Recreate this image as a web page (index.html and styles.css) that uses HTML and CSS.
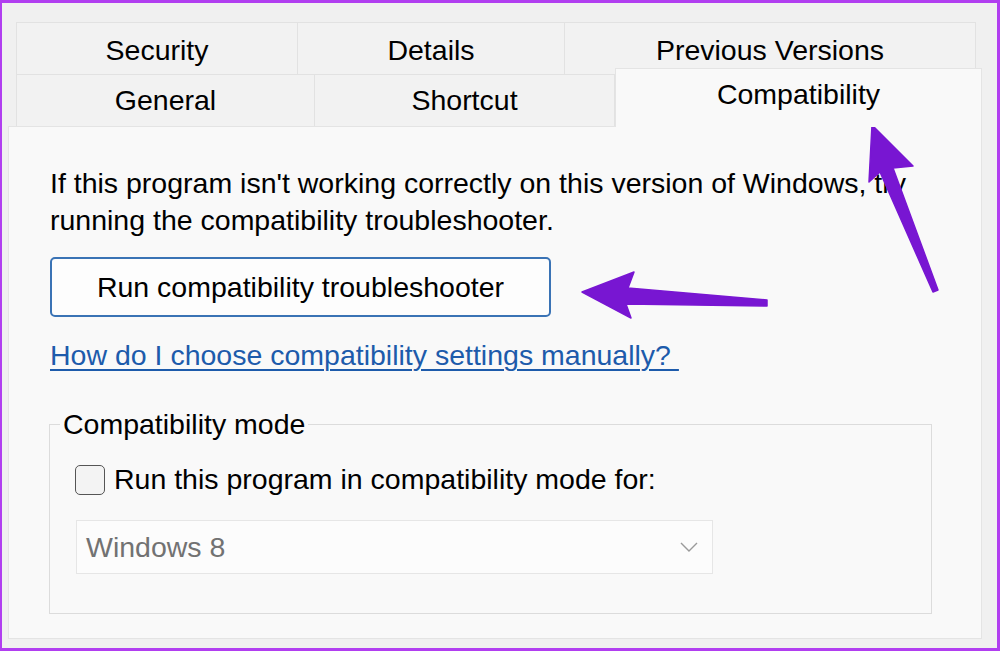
FILE: index.html
```html
<!DOCTYPE html>
<html lang="en">
<head>
  <meta charset="UTF-8" />
  <meta name="viewport" content="width=device-width, initial-scale=1" />
  <title>Properties - Compatibility</title>
  <link rel="stylesheet" href="styles.css">
</head>
<body>
  <div class="window">
    <div class="tabs">
      <div class="tab-row top-row">
        <div class="tab tab-security">Security</div>
        <div class="tab tab-details">Details</div>
        <div class="tab tab-previous">Previous Versions</div>
      </div>
      <div class="tab-row bottom-row">
        <div class="tab tab-general">General</div>
        <div class="tab tab-shortcut">Shortcut</div>
        <div class="tab tab-active">Compatibility</div>
      </div>
    </div>

    <div class="panel">
      <p class="intro">If this program isn't working correctly on this version of Windows, try running the compatibility troubleshooter.</p>
      <button class="run-btn">Run compatibility troubleshooter</button>
      <a href="#" class="help-link">How do I choose compatibility settings manually?&nbsp;</a>

      <fieldset class="group">
        <legend>Compatibility mode</legend>
        <label class="check-row">
          <span class="checkbox"></span>
          <span>Run this program in compatibility mode for:</span>
        </label>
        <div class="dropdown">
          <span>Windows 8</span>
          <svg class="chevron" width="18" height="10" viewBox="0 0 18 10">
            <path d="M1 1 L9 9 L17 1" fill="none" stroke="#9a9a9a" stroke-width="1.4" />
          </svg>
        </div>
      </fieldset>
    </div>

    <!-- annotation arrows drawn over the dialog -->
    <svg class="arrows" width="1000" height="651" viewBox="0 0 1000 651">
      <polygon points="872,125 913,166 893,168 938,290 933,292 880,172 869,182" />
      <polygon points="582,292 634,272 628,288 767,300 767,306 626,304 631,318" />
    </svg>
  </div>
</body>
</html>
```

FILE: styles.css
```css
html, body {
  margin: 0;
  padding: 0;
  height: 100%;
  overflow: hidden;
}
body {
  font-family: "Liberation Sans", Arial, sans-serif;
  font-size: 28.5px;
  color: #000;
  background: #f0f0f0;
}
.window {
  position: relative;
  width: 1000px;
  height: 651px;
  box-sizing: border-box;
  border: 3px solid #b13ef0;
  border-left-width: 2px;
  background: #f0f0f0;
}
.tabs {
  padding: 19px 0 0 14px;
}
.tab-row {
  display: flex;
  align-items: flex-end;
}
.tab {
  box-sizing: border-box;
  height: 52px;
  display: flex;
  align-items: center;
  justify-content: center;
  background: #f2f2f2;
  border: 1px solid #e2e2e2;
  border-bottom: none;
  line-height: 1;
}
.top-row .tab {
  padding-top: 4px;
}
.tab-security { width: 282px; }
.tab-details { width: 267px; border-left: none; }
.tab-previous { width: 411px; border-left: none; }
.bottom-row {
  margin-top: -6px;
}
.tab-general { width: 299px; }
.tab-shortcut { width: 300px; border-left: none; }
.tab-active {
  position: relative;
  z-index: 1;
  width: 367px;
  height: 59px;
  margin-bottom: -1px;
  padding-bottom: 8px;
  background: #f9f9f9;
  border-color: #e4e4e4;
}
.panel {
  box-sizing: border-box;
  width: 974px;
  margin-left: 6px;
  padding: 38px 41px 24px 41px;
  background: #f9f9f9;
  border: 1px solid #e4e4e4;
}
.intro {
  margin: 0;
  line-height: 37px;
}
.run-btn {
  display: block;
  box-sizing: border-box;
  width: 501px;
  height: 60px;
  margin-top: 18px;
  padding: 0;
  font: inherit;
  color: #000;
  background: #fdfdfd;
  border: 2px solid #3a73b5;
  border-radius: 5px;
}
.help-link {
  display: inline-block;
  margin-top: 20px;
  line-height: 37px;
  color: #1d5bab;
  text-decoration: underline;
  text-underline-offset: 4px;
  text-decoration-thickness: 1.5px;
}
.group {
  margin: 32px 0 0 -1px;
  width: 883px;
  box-sizing: border-box;
  padding: 0 0 39px 26px;
  border: 1px solid #dcdcdc;
  min-width: 0;
}
.group legend {
  margin-left: -16px;
  padding: 0 3px;
  line-height: 37px;
}
.check-row {
  display: flex;
  align-items: center;
  gap: 9px;
  margin-top: 18px;
  line-height: 37px;
}
.checkbox {
  box-sizing: border-box;
  width: 30px;
  height: 30px;
  margin-left: -1px;
  border: 1.5px solid #555;
  border-radius: 5px;
  background: #f3f3f3;
}
.dropdown {
  box-sizing: border-box;
  width: 637px;
  height: 54px;
  margin-top: 22px;
  padding: 0 14px 0 9px;
  display: flex;
  align-items: center;
  justify-content: space-between;
  background: #fcfcfc;
  border: 1px solid #e6e6e6;
  color: #727272;
}
.arrows {
  position: absolute;
  top: -3px;
  left: -2px;
  pointer-events: none;
}
.arrows polygon {
  fill: #7816d2;
  stroke: #7816d2;
  stroke-width: 1.5;
  stroke-linejoin: round;
}
```
